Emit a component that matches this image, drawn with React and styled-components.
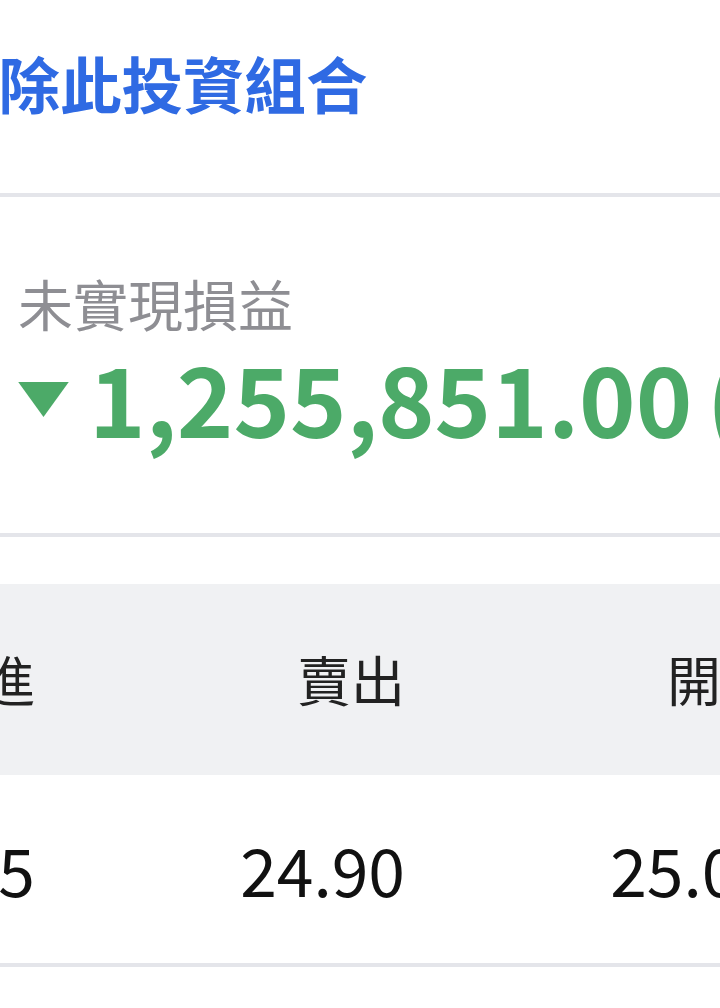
import React from 'react'
import styled, { createGlobalStyle } from 'styled-components'

const GlobalStyle = createGlobalStyle`
    html, body {
        margin: 0;
        padding: 0;
        background: #ffffff;
        overflow: hidden;
    }
    body {
        font-family: "Noto Sans CJK TC", "Noto Sans", sans-serif;
    }
`

const columns = [
    { label: '買進', value: '24.85' },
    { label: '賣出', value: '24.90' },
    { label: '開盤', value: '25.00' },
]

function App() {
    return (
        <Page>
            <GlobalStyle />
            <TitleBar>
                <DeleteLink>刪除此投資組合</DeleteLink>
            </TitleBar>
            <Divider />
            <Summary>
                <SummaryLabel>未實現損益</SummaryLabel>
                <ChangeRow>
                    <DownArrow viewBox="0 0 52 36">
                        <polygon points="0,0 52,0 26,36" />
                    </DownArrow>
                    <ChangeValue>1,255,851.00<Percent>(-4.76%)</Percent></ChangeValue>
                </ChangeRow>
            </Summary>
            <Divider />
            <QuoteTable>
                <TableRow $head>
                    {columns.map(c => <Cell key={c.label} $head>{c.label}</Cell>)}
                </TableRow>
                <TableRow>
                    {columns.map(c => <Cell key={c.label}>{c.value}</Cell>)}
                </TableRow>
                <Divider />
            </QuoteTable>
        </Page>
    )
}

export default App

const Page = styled.div`
    width: 720px;
    height: 1008px;
    overflow: hidden;
    background: #fff;
`
const TitleBar = styled.div`
    height: 193px;
    display: flex;
    align-items: flex-start;
    padding-top: 38px;
    box-sizing: border-box;
    white-space: nowrap;
`
const DeleteLink = styled.div`
    margin-left: -63px;
    font-size: 61.5px;
    line-height: 90px;
    font-weight: 700;
    color: #2f6ae3;
`
const Divider = styled.div`
    height: 4px;
    background: #e4e5ea;
`
const Summary = styled.div`
    height: 336px;
    box-sizing: border-box;
    padding: 70px 0 0 18px;
    white-space: nowrap;
`
const SummaryLabel = styled.div`
    font-size: 55px;
    line-height: 70px;
    color: #8e8e93;
`
const ChangeRow = styled.div`
    display: flex;
    align-items: center;
    gap: 20px;
`
const DownArrow = styled.svg`
    width: 51px;
    height: 35px;
    flex: none;
    fill: #4caa68;
    margin-top: 4px;
`
const ChangeValue = styled.div`
    font-size: 96px;
    line-height: 120px;
    font-weight: 700;
    color: #4caa68;
`
const Percent = styled.span`
    margin-left: 14px;
`
const QuoteTable = styled.div`
    margin-top: 47px;
`
const TableRow = styled.div`
    display: grid;
    grid-template-columns: repeat(3, 370px);
    width: 1110px;
    margin-left: -335px;
    height: ${p => (p.$head ? '191px' : '188px')};
    align-items: center;
    background: ${p => (p.$head ? '#f0f1f3' : '#fff')};
`
const Cell = styled.div`
    text-align: right;
    white-space: nowrap;
    color: ${p => (p.$head ? '#222' : '#111')};
    font-size: ${p => (p.$head ? '54px' : '66px')};
    line-height: 1.2;
`
